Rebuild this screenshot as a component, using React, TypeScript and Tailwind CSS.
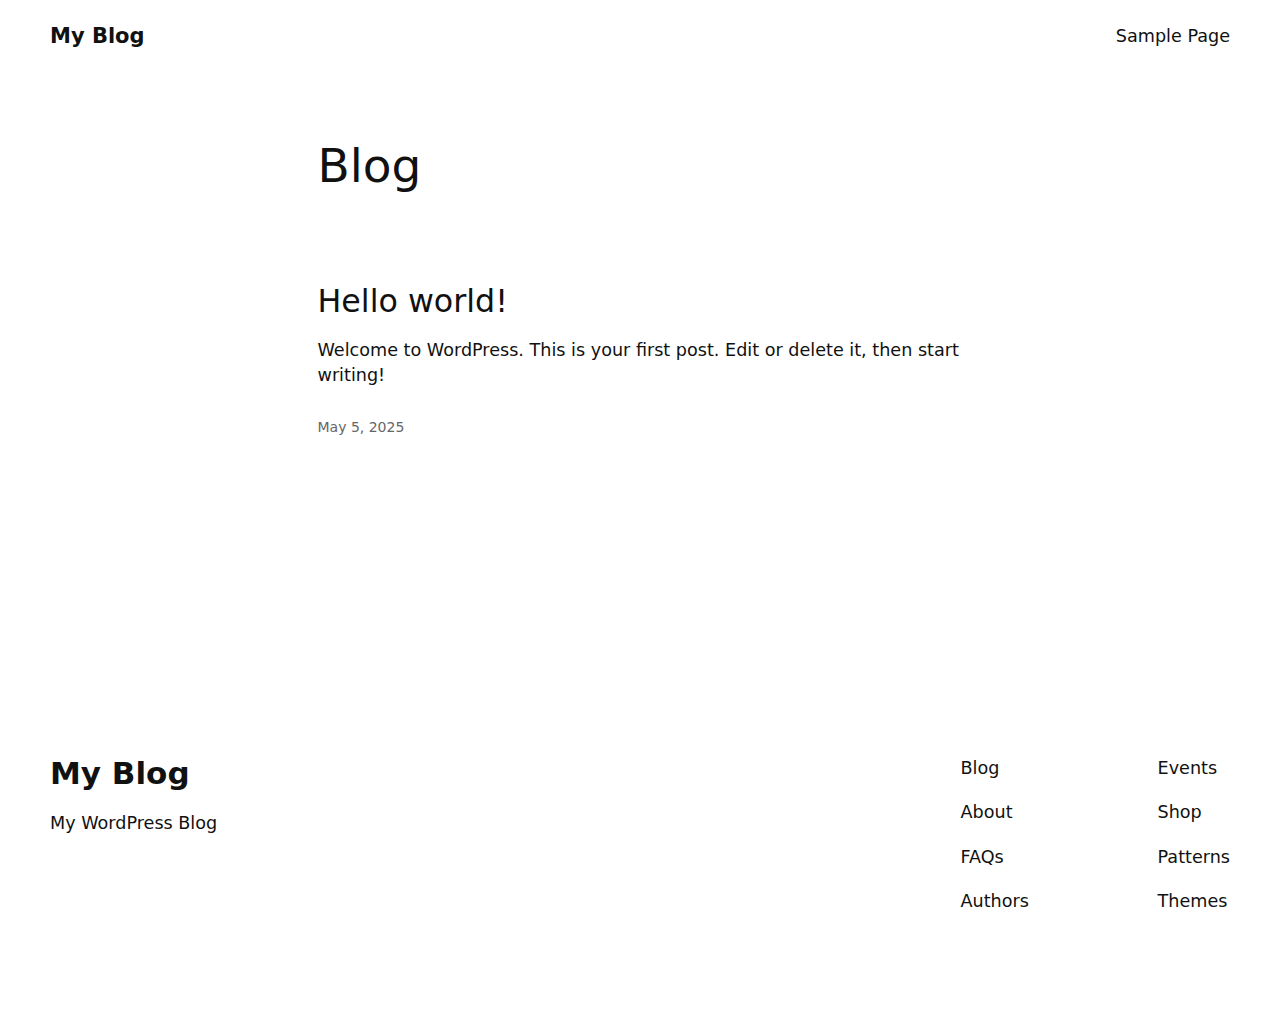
export default function App() {
  const col1 = ["Blog", "About", "FAQs", "Authors"];
  const col2 = ["Events", "Shop", "Patterns", "Themes"];

  return (
    <div className="min-h-[1024px] bg-white text-[#111111]" style={{ fontFamily: '"DejaVu Sans", sans-serif' }}>
      <header className="flex h-[70px] items-center justify-between px-[50px] pt-[20px] pb-[20px]">
        <a className="mt-[4px] text-[21px] font-bold">My Blog</a>
        <nav className="mt-[2px] text-[17.6px]">
          <a>Sample Page</a>
        </nav>
      </header>

      <main className="mx-auto w-[645px] pt-[68px]">
        <h1 className="text-[47px] leading-[1.2]">Blog</h1>

        <article className="mt-[88px]">
          <h2 className="text-[31.7px] leading-[1.2]">Hello world!</h2>
          <p className="mt-[18px] text-[17.6px] leading-[1.4]">
            Welcome to WordPress. This is your first post. Edit or delete it, then start writing!
          </p>
          <div className="mt-[29px] text-[14px] text-[#666666]">May 5, 2025</div>
        </article>
      </main>

      <footer className="mt-[318px] flex justify-between px-[50px]">
        <div>
          <div className="-mt-[1px] text-[31px] font-bold leading-[1.2]">My Blog</div>
          <div className="mt-[19px] text-[17.6px] leading-[1.4]">My WordPress Blog</div>
        </div>
        <div className="flex">
          <ul className="flex w-[197px] flex-col gap-[19.9px] text-[17.6px] leading-[1.4]">
            {col1.map((l) => (
              <li key={l}>{l}</li>
            ))}
          </ul>
          <ul className="flex flex-col gap-[19.9px] text-[17.6px] leading-[1.4]">
            {col2.map((l) => (
              <li key={l}>{l}</li>
            ))}
          </ul>
        </div>
      </footer>
    </div>
  );
}
